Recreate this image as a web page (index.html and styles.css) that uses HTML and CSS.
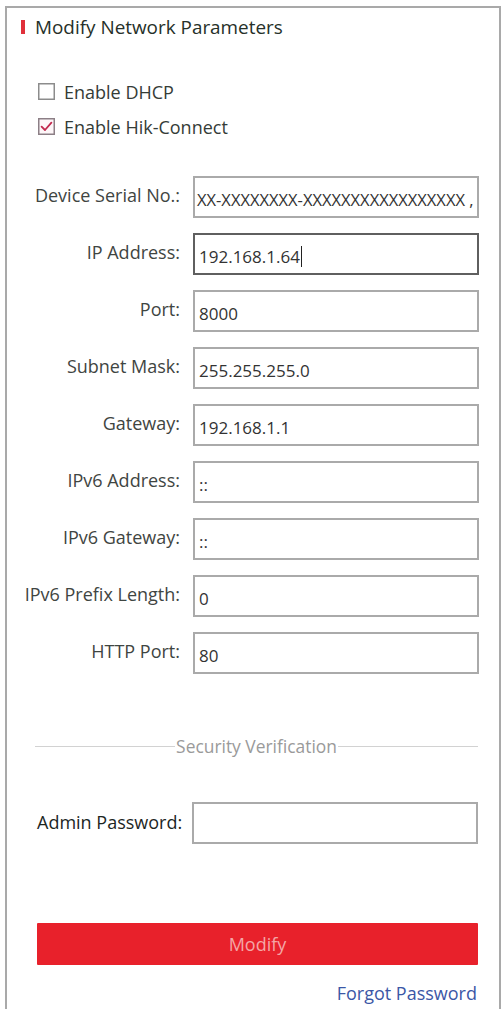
FILE: index.html
```html
<!DOCTYPE html>
<html lang="en">
<head>
<meta charset="utf-8">
<title>Modify Network Parameters</title>
<link rel="stylesheet" href="styles.css">
</head>
<body>
<div class="panel">
  <div class="title">
    <span class="title-bar"></span>
    <span class="title-text">Modify Network Parameters</span>
  </div>

  <div class="checks">
    <div class="check-row">
      <svg class="cb" width="17" height="17" viewBox="0 0 17 17"><rect x="0.75" y="0.75" width="15.5" height="15.5" fill="#fff" stroke="#8c8c8c" stroke-width="1.5"/></svg>
      <span class="check-label">Enable DHCP</span>
    </div>
    <div class="check-row">
      <svg class="cb" width="17" height="17" viewBox="0 0 17 17"><rect x="0.75" y="0.75" width="15.5" height="15.5" fill="#fdf6f8" stroke="#8c7f86" stroke-width="1.5"/><path d="M3.6 8.6 L7 12 L13.4 4.6" fill="none" stroke="#c2294e" stroke-width="1.8" stroke-linecap="round" stroke-linejoin="round"/></svg>
      <span class="check-label">Enable Hik-Connect</span>
    </div>
  </div>

  <div class="form">
    <div class="label">Device Serial No.:</div>
    <div class="field serial"><span>XX-XXXXXXXX-XXXXXXXXXXXXXXXXX ,</span></div>

    <div class="label">IP Address:</div>
    <div class="field focused"><span>192.168.1.64</span><span class="caret"></span></div>

    <div class="label">Port:</div>
    <div class="field"><span>8000</span></div>

    <div class="label">Subnet Mask:</div>
    <div class="field"><span>255.255.255.0</span></div>

    <div class="label">Gateway:</div>
    <div class="field"><span>192.168.1.1</span></div>

    <div class="label">IPv6 Address:</div>
    <div class="field"><span>::</span></div>

    <div class="label">IPv6 Gateway:</div>
    <div class="field"><span>::</span></div>

    <div class="label">IPv6 Prefix Length:</div>
    <div class="field"><span>0</span></div>

    <div class="label">HTTP Port:</div>
    <div class="field"><span>80</span></div>
  </div>

  <div class="separator">
    <span class="sep-line"></span>
    <span class="sep-text">Security Verification</span>
    <span class="sep-line"></span>
  </div>

  <div class="admin-row">
    <div class="admin-label">Admin Password:</div>
    <div class="field"></div>
  </div>

  <div class="button">Modify</div>

  <div class="forgot">Forgot Password</div>
</div>
</body>
</html>
```
FILE: styles.css
```css
html, body {
  margin: 0;
  padding: 0;
  height: 1009px;
  overflow: hidden;
  background: #ffffff;
}

body {
  font-family: "Open Sans", "Noto Sans", sans-serif;
  font-size: 18px;
  color: #3f4441;
}

.panel {
  margin: 6px 0 0 5px;
  width: 492px;
  min-height: 1040px;
  border: 2px solid #a9a9a9;
  border-bottom: none;
  padding-top: 8px;
  box-sizing: content-box;
}

.title {
  display: flex;
  align-items: center;
  height: 22px;
  padding-left: 14px;
}

.title-bar {
  width: 4px;
  height: 14px;
  background: #e0303a;
  margin-right: 10px;
}

.title-text {
  font-size: 18.9px;
  color: #263029;
  line-height: 22px;
}

.checks {
  margin-top: 36px;
  padding-left: 31px;
}

.check-row {
  display: flex;
  align-items: center;
  height: 35px;
}

.cb {
  flex: none;
  margin-right: 9px;
}

.check-label {
  color: #353c37;
  line-height: 22px;
}

.form {
  margin-top: 32px;
  display: grid;
  grid-template-columns: 173px 286px;
  grid-auto-rows: 42px;
  column-gap: 13px;
  row-gap: 15px;
}

.label {
  display: flex;
  align-items: center;
  justify-content: flex-end;
  white-space: nowrap;
  padding-bottom: 4px;
  color: #3f4542;
}

.field {
  box-sizing: border-box;
  height: 42px;
  border: 2px solid #aaaaaa;
  display: flex;
  align-items: center;
  padding: 4px 0 0 4px;
  font-size: 17px;
  color: #333333;
  white-space: nowrap;
  overflow: hidden;
}

.field.focused {
  border-color: #5f5f5f;
}

.serial {
  padding-left: 2px;
  font-size: 16.5px;
}

.caret {
  width: 1.5px;
  height: 21px;
  background: #222;
  margin-left: 1px;
}

.separator {
  margin: 61px 21px 0 28px;
  display: flex;
  align-items: center;
  height: 22px;
}

.sep-line {
  flex: 1;
  height: 1px;
  background: #d2d2d2;
}

.sep-text {
  color: #9a9a9a;
  font-size: 17.4px;
  line-height: 22px;
  padding: 0 1px;
}

.admin-row {
  margin: 45px 21px 0 30px;
  display: flex;
  align-items: center;
}

.admin-label {
  flex: 1;
  color: #1c261f;
  white-space: nowrap;
  padding-bottom: 2px;
}

.admin-row .field {
  width: 286px;
  flex: none;
}

.button {
  margin: 79px 21px 0 30px;
  height: 42px;
  background: #e8212b;
  color: #f4a6a6;
  display: flex;
  align-items: center;
  justify-content: center;
  font-size: 18px;
  border-radius: 1px;
}

.forgot {
  margin: 17px 22px 0 0;
  text-align: right;
  color: #3b57a6;
  line-height: 22px;
}
```
